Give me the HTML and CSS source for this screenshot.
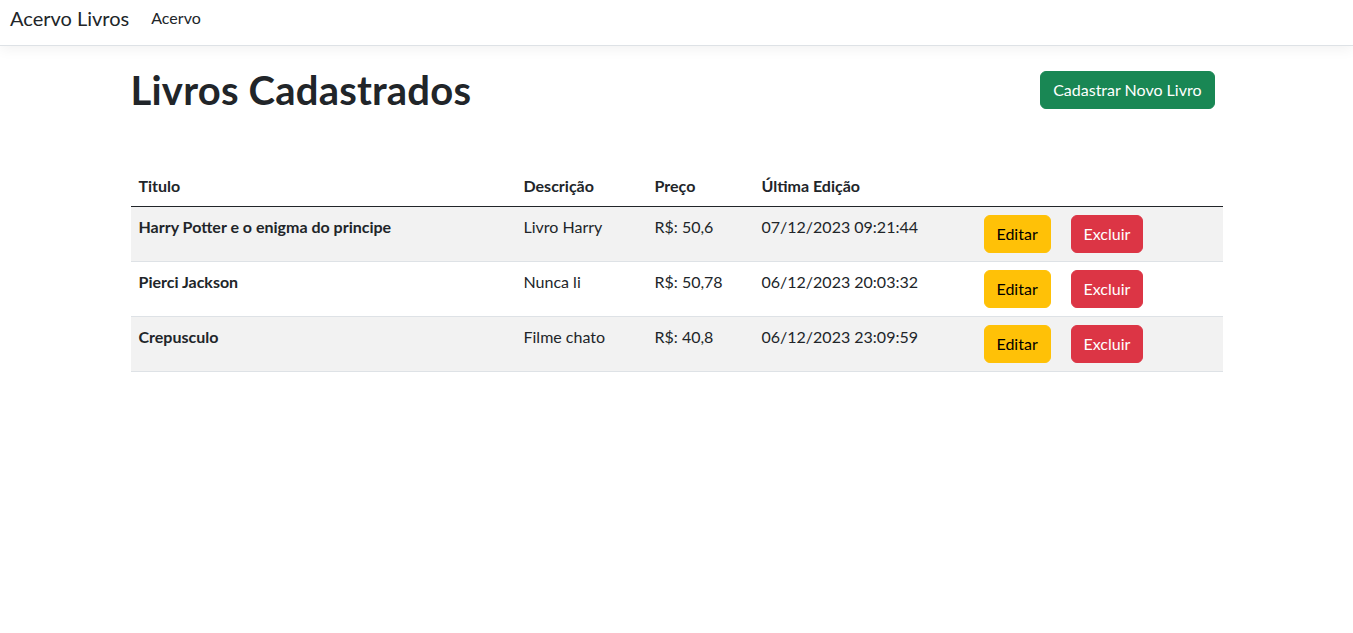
FILE: index.html
```html
<!DOCTYPE html>
<html lang="pt-br">
<head>
<meta charset="utf-8">
<title>Acervo Livros</title>
<link rel="stylesheet" href="styles.css">
</head>
<body>
<header class="navbar">
  <a class="brand" href="#">Acervo Livros</a>
  <nav class="nav"><a class="nav-link" href="#">Acervo</a></nav>
</header>
<main class="main">
  <div class="page-head">
    <h1 class="title">Livros Cadastrados</h1>
    <a class="btn btn-success" href="#">Cadastrar Novo Livro</a>
  </div>
  <table class="books">
    <colgroup>
      <col class="c-title"><col class="c-desc"><col class="c-price"><col class="c-date"><col class="c-edit"><col class="c-del">
    </colgroup>
    <thead>
      <tr><th>Titulo</th><th>Descrição</th><th>Preço</th><th>Última Edição</th><th></th><th></th></tr>
    </thead>
    <tbody>
      <tr class="odd">
        <td class="strong">Harry Potter e o enigma do principe</td>
        <td>Livro Harry</td>
        <td>R$: 50,6</td>
        <td>07/12/2023 09:21:44</td>
        <td><a class="btn btn-warning" href="#">Editar</a></td>
        <td><a class="btn btn-danger" href="#">Excluir</a></td>
      </tr>
      <tr>
        <td class="strong">Pierci Jackson</td>
        <td>Nunca li</td>
        <td>R$: 50,78</td>
        <td>06/12/2023 20:03:32</td>
        <td><a class="btn btn-warning" href="#">Editar</a></td>
        <td><a class="btn btn-danger" href="#">Excluir</a></td>
      </tr>
      <tr class="odd">
        <td class="strong">Crepusculo</td>
        <td>Filme chato</td>
        <td>R$: 40,8</td>
        <td>06/12/2023 23:09:59</td>
        <td><a class="btn btn-warning" href="#">Editar</a></td>
        <td><a class="btn btn-danger" href="#">Excluir</a></td>
      </tr>
    </tbody>
  </table>
</main>
</body>
</html>
```
FILE: styles.css
```css
* { box-sizing: border-box; }
html, body { margin: 0; padding: 0; background: #fff; }
body {
  font-family: Lato, "Liberation Sans", sans-serif;
  font-size: 16px;
  line-height: 1.5;
  color: #212529;
}
a { text-decoration: none; }

.navbar {
  display: flex;
  align-items: flex-start;
  height: 46px;
  padding: 3px 10px 0;
  border-bottom: 1px solid #dee2e6;
  box-shadow: 0 4px 12px rgba(0,0,0,0.05);
}
.brand {
  font-size: 20px;
  line-height: 30px;
  color: #212529;
  margin-right: 14px;
}
.nav { display: flex; }
.nav-link {
  font-size: 16px;
  line-height: 30px;
  padding: 0 8px;
  color: #212529;
}

.main {
  width: 1092px;
  margin: 0 auto;
}
.page-head {
  display: flex;
  align-items: center;
  justify-content: space-between;
  margin-top: 20px;
  margin-bottom: 52px;
  padding-right: 8px;
}
.title {
  margin: 0;
  font-size: 40px;
  line-height: 48px;
  font-weight: 700;
  letter-spacing: 0.2px;
  color: #212529;
}

.btn {
  display: inline-block;
  padding: 6px 12px;
  border: 1px solid transparent;
  border-radius: 6px;
  font-size: 16px;
  line-height: 24px;
  white-space: nowrap;
}
.btn-success { background: #198754; border-color: #198754; color: #fff; }
.btn-warning { background: #ffc107; border-color: #ffc107; color: #000; }
.btn-danger { background: #dc3545; border-color: #dc3545; color: #fff; }

.books {
  width: 1092px;
  table-layout: fixed;
  border-collapse: collapse;
}
.c-title { width: 385px; }
.c-desc { width: 131px; }
.c-price { width: 107px; }
.c-date { width: 222px; }
.c-edit { width: 87px; }
.c-del { width: 160px; }

.books th {
  text-align: left;
  font-weight: 700;
  padding: 8px;
  border-bottom: 1px solid #212529;
}
.books td {
  padding: 8px;
  vertical-align: top;
  border-bottom: 1px solid #dee2e6;
  white-space: nowrap;
}
.books tr.odd td { background: #f2f2f2; }
.books td.strong { font-weight: 700; }
```
